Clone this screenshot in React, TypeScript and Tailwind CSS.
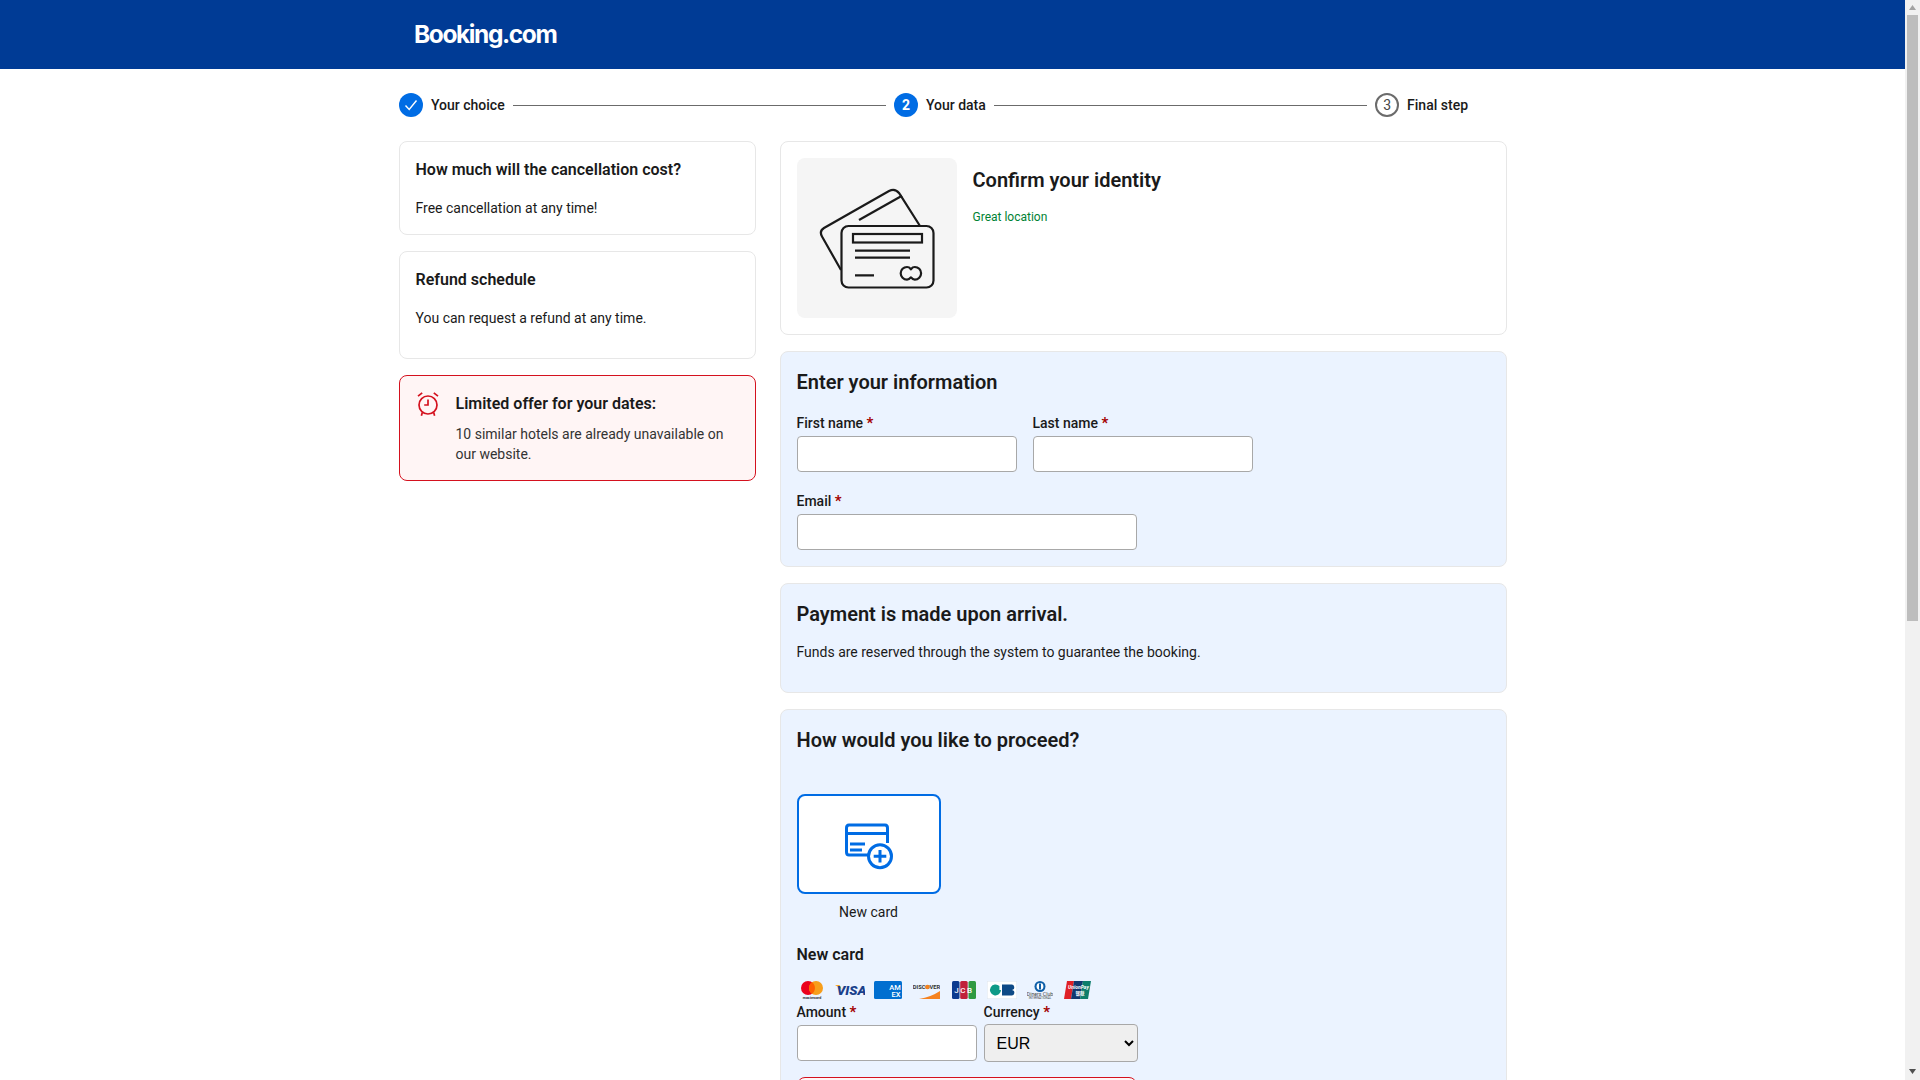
import React from "react";

function BigCardIcon() {
  return (
    <svg width="160" height="160" viewBox="0 0 160 160" fill="none" stroke="#1a1a1a" strokeWidth="2.2">
      <rect x="44.5" y="68" width="92" height="61.5" rx="7" />
      <rect x="56" y="76" width="69" height="8.5" />
      <path d="M58 92.7H113M58 99.7H113M58 117.3H77" />
      <path d="M110 109a6.3 6.3 0 1 0 0 12.6c3 0 3.5-2.3 3.9-2.3s.9 2.3 3.9 2.3a6.3 6.3 0 1 0 0-12.6c-3 0-3.5 2.3-3.9 2.3s-.9-2.3-3.9-2.3z" />
      <path d="M44 112L25 78.5Q22 73 27 70L92 33Q98 30 102 35L123 68" />
      <path d="M62 62L105 37.7" />
    </svg>
  );
}

function NewCardIcon() {
  return (
    <svg width="48" height="48" viewBox="0 0 48 48" fill="none" stroke="#006ce4" strokeWidth="3">
      <path d="M23 32H4Q1.5 32 1.5 29V5Q1.5 2 4 2H40Q42.5 2 42.5 5V20" />
      <path d="M1.5 10.5H42.5M5 21H20M5 27H17" />
      <circle cx="35" cy="33.3" r="11.5" />
      <path d="M35 27V39.6M28.7 33.3H41.3" />
    </svg>
  );
}

function AlarmIcon() {
  return (
    <svg width="24" height="24" viewBox="0 0 24 24" fill="none" stroke="#d4111e" strokeWidth="1.7">
      <circle cx="12" cy="13" r="9" />
      <path d="M12 7.5V13H8.2M2 4.2L6.2 0.8M22 4.2L17.8 0.8M6.3 20.5L5.4 23.8M17.7 20.5L18.6 23.8" />
    </svg>
  );
}

function PaymentLogos() {
  return (
    <div className="mt-[14px] flex h-[18px] items-center">
      <svg className="ml-1" width="22" height="18" viewBox="0 0 22 18">
        <circle cx="7" cy="7" r="7" fill="#eb001b" />
        <circle cx="15" cy="7" r="7" fill="#f79e1b" />
        <path d="M11 1.3a7 7 0 0 1 0 11.4a7 7 0 0 1 0-11.4z" fill="#ff5f00" />
        <text x="11" y="17.8" fontSize="3.6" textAnchor="middle" fill="#333" fontFamily="Roboto" fontWeight="700">mastercard</text>
      </svg>
      <svg className="ml-3" width="30" height="18" viewBox="0 0 30 18">
        <path d="M0 4H4.5L6.5 8Z" fill="#f7a823" />
        <text x="16.5" y="14" fontSize="13.5" textAnchor="middle" fill="#1a3f8b" fontFamily="Roboto" fontWeight="900" fontStyle="italic">VISA</text>
      </svg>
      <svg className="ml-[9px]" width="28" height="18" viewBox="0 0 28 18">
        <rect width="28" height="18" rx="1.5" fill="#016fd0" />
        <text x="21" y="9" fontSize="7.5" textAnchor="middle" fill="#fff" fontFamily="Roboto" fontWeight="500">AM</text>
        <text x="22" y="16" fontSize="7.5" textAnchor="middle" fill="#fff" fontFamily="Roboto" fontWeight="500">EX</text>
      </svg>
      <svg className="ml-[11px]" width="27" height="18" viewBox="0 0 27 18">
        <text x="13.5" y="8" fontSize="5.8" textAnchor="middle" fill="#333" fontFamily="Roboto" fontWeight="700">DISCOVER</text>
        <circle cx="14.5" cy="6" r="2.3" fill="#f58220" />
        <path d="M6 18Q18 16 27 10V18Z" fill="#f58220" />
      </svg>
      <svg className="ml-3" width="24" height="18" viewBox="0 0 24 18">
        <rect width="7.5" height="18" rx="1.5" fill="#0b3a8f" />
        <rect x="8.2" width="7.5" height="18" rx="1.5" fill="#c0213a" />
        <rect x="16.5" width="7.5" height="18" rx="1.5" fill="#2f9a41" />
        <text x="12" y="12" fontSize="8" textAnchor="middle" fill="#fff" fontFamily="Roboto" fontWeight="500" letterSpacing="1.6">JCB</text>
      </svg>
      <svg className="ml-[11px]" width="30" height="18" viewBox="0 0 30 18">
        <rect x="0.25" y="0.25" width="29.5" height="17.5" fill="#fff" stroke="#dfe6ee" strokeWidth="0.5" />
        <path d="M14 9a5.5 5.5 0 1 1-1.6-3.9V9z" fill="#0e9a87" />
        <path d="M15 3.5H24a2.7 2.7 0 0 1 1 5.4a2.7 2.7 0 0 1-1 5.6H15z" fill="#0f4a86" />
      </svg>
      <svg className="ml-[10px]" width="26" height="18" viewBox="0 0 26 18">
        <circle cx="13" cy="5.5" r="5.5" fill="#0f5fa8" />
        <circle cx="13" cy="5.5" r="3.4" fill="#fff" />
        <rect x="12" y="2.5" width="2" height="6" fill="#0f5fa8" />
        <text x="13" y="15" fontSize="5.2" textAnchor="middle" fill="#444" fontFamily="Roboto">Diners Club</text>
        <text x="13" y="18" fontSize="3" textAnchor="middle" fill="#444" fontFamily="Roboto">INTERNATIONAL</text>
      </svg>
      <svg className="ml-[11px]" width="27" height="18" viewBox="0 0 27 18">
        <path d="M3 0H10L7 18H0Z" fill="#df2027" />
        <path d="M10 0H19L16 18H7Z" fill="#12386f" />
        <path d="M19 0H27L24 18H16Z" fill="#0d7e6b" />
        <text x="14.5" y="7.5" fontSize="5" textAnchor="middle" fill="#fff" fontFamily="Roboto" fontStyle="italic" fontWeight="700">UnionPay</text>
        <text x="16" y="13.5" fontSize="4.5" textAnchor="middle" fill="#fff" fontFamily="Noto Sans CJK SC" fontWeight="700">银联</text>
      </svg>
    </div>
  );
}

function Req() {
  return <span className="text-[15px] font-bold leading-none text-[#a30000]">*</span>;
}

function Scrollbar() {
  return (
    <div className="flex h-screen w-[15px] shrink-0 flex-col items-center bg-[#f1f1f1]">
      <svg className="mt-[5px] shrink-0" width="7" height="5" viewBox="0 0 7 5"><path d="M3.5 0L7 5H0Z" fill="#a3a3a3" /></svg>
      <div className="mt-[5px] h-[606px] w-[11px] shrink-0 bg-[#bdbdbd]" />
      <svg className="mb-[6px] mt-auto shrink-0" width="7" height="5" viewBox="0 0 7 5"><path d="M0 0H7L3.5 5Z" fill="#505050" /></svg>
    </div>
  );
}

export default function App() {
  return (
    <div className="flex h-screen overflow-hidden bg-white font-['Roboto',sans-serif] text-[#1a1a1a]">
      <div className="h-screen min-w-0 flex-1 overflow-y-auto [scrollbar-width:none]">
        <div className="min-h-[1871px]">
          <header className="h-[69px] bg-[#003b95]">
            <div className="mx-auto flex h-full w-[1108px] items-center pl-[15.5px]">
              <span className="font-['Inter',sans-serif] text-[24.5px] font-bold tracking-[-1.4px] text-white">Booking.com</span>
            </div>
          </header>

          <main className="mx-auto w-[1108px]">
            <nav className="mt-6 flex h-6 items-center gap-2 pl-[0.5px] text-sm font-medium">
              <span className="flex h-6 w-6 items-center justify-center rounded-full bg-[#006ce4]">
                <svg width="14" height="14" viewBox="0 0 14 14" fill="none" stroke="#fff" strokeWidth="1.4">
                  <path d="M1.5 7.5L5.2 11.5L12.5 2.5" />
                </svg>
              </span>
              <span>Your choice</span>
              <span className="h-px flex-1 bg-[#6b6b6b]" />
              <span className="flex h-6 w-6 items-center justify-center rounded-full bg-[#006ce4] font-bold text-white">2</span>
              <span>Your data</span>
              <span className="h-px flex-1 bg-[#6b6b6b]" />
              <span className="flex h-6 w-6 items-center justify-center rounded-full border-2 border-[#6b6b6b] font-normal text-[#474747]">3</span>
              <span className="mr-[38.5px]">Final step</span>
            </nav>

            <div className="mt-6 flex items-start gap-6">
              <aside className="flex w-[357px] shrink-0 flex-col gap-4">
                <section className="rounded-lg border border-[#e7e7e7] bg-white px-4 pb-4 pt-4">
                  <h3 className="text-base font-semibold leading-6">How much will the cancellation cost?</h3>
                  <p className="mt-4 text-sm leading-5">Free cancellation at any time!</p>
                </section>
                <section className="rounded-lg border border-[#e7e7e7] bg-white px-4 pb-[30px] pt-4">
                  <h3 className="text-base font-semibold leading-6">Refund schedule</h3>
                  <p className="mt-4 text-sm leading-5">You can request a refund at any time.</p>
                </section>
                <section className="flex gap-4 rounded-lg border border-[#d4111e] bg-[#fff5f5] px-4 pb-4 pt-4">
                  <span className="shrink-0"><AlarmIcon /></span>
                  <div>
                    <h3 className="text-base font-semibold leading-6">Limited offer for your dates:</h3>
                    <p className="mt-2 text-sm leading-5 text-[#333333]">10 similar hotels are already unavailable on our website.</p>
                  </div>
                </section>
              </aside>

              <div className="flex min-w-0 flex-1 flex-col gap-4">
                <section className="flex gap-4 rounded-lg border border-[#e7e7e7] bg-white p-4">
                  <div className="h-40 w-40 shrink-0 rounded-lg bg-[#f5f5f5]"><BigCardIcon /></div>
                  <div className="pt-2">
                    <h2 className="text-xl font-semibold leading-7">Confirm your identity</h2>
                    <p className="mt-[15px] text-xs leading-4 text-[#008234]">Great location</p>
                  </div>
                </section>

                <section className="rounded-lg border border-[#e7e7e7] bg-[#ebf3ff] p-4">
                  <h2 className="text-xl font-semibold leading-7">Enter your information</h2>
                  <div className="mt-[17px] flex gap-4">
                    <div>
                      <label className="block text-sm font-medium leading-5">First name <Req /></label>
                      <input className="mt-[3px] block h-9 w-[220px] rounded border border-[#a8a8a8] bg-white" />
                    </div>
                    <div>
                      <label className="block text-sm font-medium leading-5">Last name <Req /></label>
                      <input className="mt-[3px] block h-9 w-[220px] rounded border border-[#a8a8a8] bg-white" />
                    </div>
                  </div>
                  <div className="mt-[19px]">
                    <label className="block text-sm font-medium leading-5">Email <Req /></label>
                    <input className="mt-[3px] block h-9 w-[340px] rounded border border-[#a8a8a8] bg-white" />
                  </div>
                </section>

                <section className="rounded-lg border border-[#e7e7e7] bg-[#ebf3ff] px-4 pb-[30px] pt-4">
                  <h2 className="text-xl font-semibold leading-7">Payment is made upon arrival.</h2>
                  <p className="mt-[14px] text-sm leading-5">Funds are reserved through the system to guarantee the booking.</p>
                </section>

                <section className="min-h-[1146px] rounded-lg border border-[#e7e7e7] bg-[#ebf3ff] p-4">
                  <h2 className="text-xl font-semibold leading-7">How would you like to proceed?</h2>
                  <div className="mt-10 w-36">
                    <div className="flex h-[100px] items-center justify-center rounded-lg border-2 border-[#006ce4] bg-white pt-[5px]">
                      <NewCardIcon />
                    </div>
                    <p className="mt-2 text-center text-sm leading-5">New card</p>
                  </div>
                  <h3 className="mt-[21px] text-base font-semibold leading-6">New card</h3>
                  <PaymentLogos />
                  <div className="mt-[3px] flex gap-[7px]">
                    <div>
                      <label className="block text-sm font-medium leading-5">Amount <Req /></label>
                      <input className="mt-[3px] block h-9 w-[180px] rounded border border-[#a8a8a8] bg-white" />
                    </div>
                    <div>
                      <label className="block text-sm font-medium leading-5">Currency <Req /></label>
                      <select className="mt-[2px] block h-[38px] w-[154px] rounded border border-[#a8a8a8] bg-[#efefef] pl-2 font-['Liberation_Sans',sans-serif] text-base text-black">
                        <option>EUR</option>
                      </select>
                    </div>
                  </div>
                  <div className="mt-[15px] h-[100px] w-[340px] rounded-lg border border-[#d4111e] bg-[#fff5f5]" />
                </section>
              </div>
            </div>
          </main>
        </div>
      </div>
      <Scrollbar />
    </div>
  );
}
